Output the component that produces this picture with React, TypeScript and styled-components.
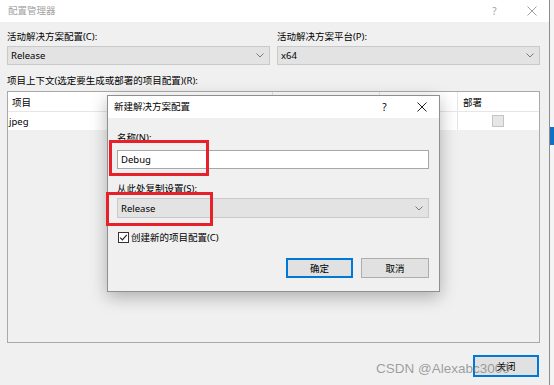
import React from "react";
import styled, { createGlobalStyle } from "styled-components";

const GlobalStyle = createGlobalStyle`
  body {
    margin: 0;
    background: #f0f0f0;
    overflow: hidden;
  }
`;

const Screen = styled.div`
  position: relative;
  display: flex;
  width: 554px;
  height: 385px;
  font-family: "Noto Sans", "Noto Sans CJK SC", sans-serif;
  font-size: 9.5px;
  color: #000;
`;

const MainWindow = styled.div`
  position: relative;
  display: flex;
  flex-direction: column;
  width: 550px;
  box-sizing: border-box;
  border-right: 1px solid #8c8c8c;
  background: #f0f0f0;
`;

const TitleBar = styled.div<{ $height: number; $inactive?: boolean }>`
  display: flex;
  align-items: center;
  height: ${(p) => p.$height}px;
  background: #fff;
  color: ${(p) => (p.$inactive ? "#a3a3a3" : "#000")};
  flex-shrink: 0;
`;

const TitleText = styled.span<{ $left: number }>`
  flex: 1;
  padding-left: ${(p) => p.$left}px;
  line-height: 14px;
`;

const TitleButtons = styled.div`
  display: flex;
  gap: 2px;
`;

const TitleButton = styled.div`
  width: 35px;
  height: 20px;
  display: flex;
  align-items: center;
  justify-content: center;
  font-size: 10px;
`;

const Content = styled.div`
  display: flex;
  flex-direction: column;
  padding: 0 9px 0 7px;
`;

const FieldGrid = styled.div`
  display: grid;
  grid-template-columns: 263px 263px;
  column-gap: 7px;
  margin-top: 7px;
`;

const Field = styled.div`
  display: flex;
  flex-direction: column;
`;

const Label = styled.div<{ $top?: number }>`
  line-height: 15px;
  margin-top: ${(p) => p.$top ?? 0}px;
  white-space: nowrap;
`;

const SelectBox = styled.div<{ $height: number; $top: number }>`
  display: flex;
  align-items: center;
  justify-content: space-between;
  box-sizing: border-box;
  height: ${(p) => p.$height}px;
  margin-top: ${(p) => p.$top}px;
  padding: 0 5px 0 3px;
  background: #e3e3e3;
  border: 1px solid #c9c9c9;
`;

const Table = styled.div`
  margin-top: 3px;
  height: 252px;
  box-sizing: border-box;
  border: 1px solid #a9a9a9;
  background: #f0f0f0;
`;

const TableRow = styled.div<{ $height: number; $header?: boolean }>`
  display: grid;
  grid-template-columns: 265px 107px 78px 80px;
  height: ${(p) => p.$height}px;
  background: #fff;
  border-bottom: ${(p) => (p.$header ? "1px solid #e6e6e6" : "none")};
`;

const Cell = styled.div<{ $pad: number; $divider?: boolean; $center?: boolean }>`
  display: flex;
  align-items: center;
  justify-content: ${(p) => (p.$center ? "center" : "flex-start")};
  padding-left: ${(p) => p.$pad}px;
  border-right: ${(p) => (p.$divider ? "1px solid #e6e6e6" : "none")};
`;

const EmptyBox = styled.div`
  width: 10px;
  height: 10px;
  background: #e6e6e6;
  border: 1px solid #c4c4c4;
`;

const Footer = styled.div`
  display: flex;
  justify-content: flex-end;
  margin-top: 12px;
  padding-right: 1px;
`;

const Button = styled.div<{ $width: number; $height: number; $focused?: boolean }>`
  display: flex;
  align-items: center;
  justify-content: center;
  box-sizing: border-box;
  width: ${(p) => p.$width}px;
  height: ${(p) => p.$height}px;
  background: #e1e1e1;
  border: ${(p) => (p.$focused ? "2px solid #0078d7" : "1px solid #adadad")};
`;

const Dialog = styled.div`
  position: absolute;
  left: 107px;
  top: 95px;
  width: 333px;
  height: 197px;
  box-sizing: border-box;
  display: flex;
  flex-direction: column;
  background: #f0f0f0;
  border: 1px solid #8f8f8f;
  box-shadow: 0 5px 16px rgba(0, 0, 0, 0.28);
`;

const DialogBody = styled.div`
  display: flex;
  flex-direction: column;
  padding: 0 10px 0 9px;
`;

const TextInput = styled.div`
  display: flex;
  align-items: center;
  box-sizing: border-box;
  height: 19px;
  margin-top: 5px;
  padding-left: 3px;
  background: #fff;
  border: 1px solid #a8a8a8;
`;

const CheckRow = styled.div`
  display: flex;
  align-items: center;
  gap: 2px;
  margin-top: 12px;
  padding-left: 1px;
  height: 14px;
`;

const CheckBox = styled.div`
  display: flex;
  align-items: center;
  justify-content: center;
  box-sizing: border-box;
  width: 11px;
  height: 11px;
  background: #fff;
  border: 1px solid #333;
`;

const ButtonRow = styled.div`
  display: flex;
  justify-content: flex-end;
  gap: 8px;
  margin-top: 14px;
`;

const Highlight = styled.div<{ $left: number; $top: number; $w: number; $h: number }>`
  position: absolute;
  left: ${(p) => p.$left}px;
  top: ${(p) => p.$top}px;
  width: ${(p) => p.$w}px;
  height: ${(p) => p.$h}px;
  box-sizing: border-box;
  border: 3px solid #e8202a;
`;

const SideStrip = styled.div`
  flex: 1;
  background: #f4f4f4;
  padding-top: 127px;
`;

const SideMarker = styled.div`
  height: 18px;
  background: #1170c4;
`;

const Watermark = styled.div`
  position: absolute;
  left: 376px;
  top: 362px;
  font-family: "Liberation Sans", Arial, sans-serif;
  font-size: 13.5px;
  line-height: 14px;
  color: rgba(120, 120, 120, 0.7);
  white-space: nowrap;
`;

const Chevron = () => (
  <svg width="8" height="5" viewBox="0 0 8 5">
    <path d="M0.5 0.5 L4 4 L7.5 0.5" fill="none" stroke="#7a7a7a" strokeWidth="1" />
  </svg>
);

const CloseGlyph = ({ color }: { color: string }) => (
  <svg width="10" height="10" viewBox="0 0 10 10">
    <path d="M0.5 0.5 L9.5 9.5 M9.5 0.5 L0.5 9.5" stroke={color} strokeWidth="1" />
  </svg>
);

const Tick = () => (
  <svg width="9" height="9" viewBox="0 0 9 9">
    <path d="M1.2 4.6 L3.4 6.8 L7.8 1.8" fill="none" stroke="#222" strokeWidth="1.2" />
  </svg>
);

const App = (): JSX.Element => {
  return (
    <Screen>
      <GlobalStyle />
      <MainWindow>
        <TitleBar $height={22} $inactive>
          <TitleText $left={8}>配置管理器</TitleText>
          <TitleButtons>
            <TitleButton>?</TitleButton>
            <TitleButton>
              <CloseGlyph color="#a0a0a0" />
            </TitleButton>
          </TitleButtons>
        </TitleBar>
        <Content>
          <FieldGrid>
            <Field>
              <Label>活动解决方案配置(C):</Label>
              <SelectBox $height={19} $top={2}>
                <span>Release</span>
                <Chevron />
              </SelectBox>
            </Field>
            <Field>
              <Label>活动解决方案平台(P):</Label>
              <SelectBox $height={19} $top={2}>
                <span>x64</span>
                <Chevron />
              </SelectBox>
            </Field>
          </FieldGrid>
          <Label $top={8}>项目上下文(选定要生成或部署的项目配置)(R):</Label>
          <Table>
            <TableRow $height={19} $header>
              <Cell $pad={4} $divider>项目</Cell>
              <Cell $pad={4} $divider />
              <Cell $pad={4} $divider />
              <Cell $pad={5}>部署</Cell>
            </TableRow>
            <TableRow $height={18}>
              <Cell $pad={1}>jpeg</Cell>
              <Cell $pad={0} />
              <Cell $pad={0} $divider />
              <Cell $pad={0} $center>
                <EmptyBox />
              </Cell>
            </TableRow>
          </Table>
          <Footer>
            <Button $width={66} $height={22} $focused>
              关闭
            </Button>
          </Footer>
        </Content>

        <Dialog>
          <TitleBar $height={22}>
            <TitleText $left={6}>新建解决方案配置</TitleText>
            <TitleButtons>
              <TitleButton>?</TitleButton>
              <TitleButton>
                <CloseGlyph color="#222" />
              </TitleButton>
            </TitleButtons>
          </TitleBar>
          <DialogBody>
            <Label $top={12}>名称(N):</Label>
            <TextInput>Debug</TextInput>
            <Label $top={12}>从此处复制设置(S):</Label>
            <SelectBox $height={20} $top={2}>
              <span>Release</span>
              <Chevron />
            </SelectBox>
            <CheckRow>
              <CheckBox>
                <Tick />
              </CheckBox>
              <span>创建新的项目配置(C)</span>
            </CheckRow>
            <ButtonRow>
              <Button $width={67} $height={20} $focused>
                确定
              </Button>
              <Button $width={68} $height={20}>
                取消
              </Button>
            </ButtonRow>
          </DialogBody>
          <Highlight $left={1} $top={44} $w={100} $h={36} />
          <Highlight $left={-2} $top={96} $w={107} $h={34} />
        </Dialog>
      </MainWindow>
      <SideStrip>
        <SideMarker />
      </SideStrip>
      <Watermark>CSDN @Alexabc3000</Watermark>
    </Screen>
  );
};

export default App;
